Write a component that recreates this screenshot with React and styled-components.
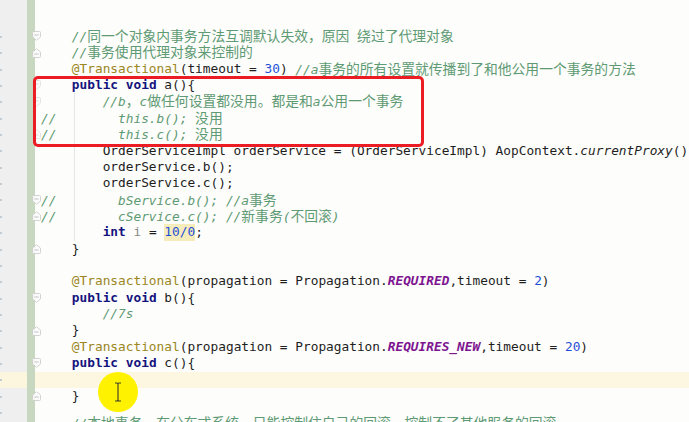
import React from "react";
import styled, { createGlobalStyle, css } from "styled-components";

const LINE = 16.36;

const GlobalStyle = createGlobalStyle`
  html, body {
    margin: 0;
    padding: 0;
    background: #fdfdfb;
  }
  body {
    overflow: hidden;
  }
`;

// each line: fold marker, tokens as [kind, text]
const lines = [
  { fold: "start", t: [["", "    "], ["cm", "//同一个对象内事务方法互调默认失效，原因 绕过了代理对象"]] },
  { fold: "end", t: [["", "    "], ["cm", "//事务使用代理对象来控制的"]] },
  {
    t: [
      ["", "    "],
      ["ann", "@Transactional"],
      ["", "(timeout = "],
      ["num", "30"],
      ["", ") "],
      ["cm", "//a事务的所有设置就传播到了和他公用一个事务的方法"],
    ],
  },
  { fold: "start", faint: true, t: [["", "    "], ["kw", "public"], ["", " "], ["kw", "void"], ["", " a(){"]] },
  { fold: "start", faint: true, guide: true, t: [["", "        "], ["cm", "//b，c做任何设置都没用。都是和a公用一个事务"]] },
  { guide: true, t: [["cm", "//        this.b(); 没用"]] },
  { fold: "end", faint: true, guide: true, t: [["cm", "//        this.c(); 没用"]] },
  {
    guide: true,
    t: [
      ["", "        OrderServiceImpl orderService = (OrderServiceImpl) AopContext."],
      ["it", "currentProxy"],
      ["", "()"],
    ],
  },
  { guide: true, t: [["", "        orderService.b();"]] },
  { guide: true, t: [["", "        orderService.c();"]] },
  { fold: "start", guide: true, t: [["cm", "//        bService.b(); //a事务"]] },
  { fold: "end", guide: true, t: [["cm", "//        cService.c(); //新事务(不回滚)"]] },
  {
    guide: true,
    t: [
      ["", "        "],
      ["kw", "int"],
      ["", " "],
      ["gray", "i"],
      ["", " = "],
      ["hl", "10/0"],
      ["", ";"],
    ],
  },
  { fold: "end", t: [["", "    }"]] },
  { t: [] },
  {
    t: [
      ["", "    "],
      ["ann", "@Transactional"],
      ["", "(propagation = Propagation."],
      ["st", "REQUIRED"],
      ["", ",timeout = "],
      ["num", "2"],
      ["", ")"],
    ],
  },
  { fold: "start", t: [["", "    "], ["kw", "public"], ["", " "], ["kw", "void"], ["", " b(){"]] },
  { t: [["", "        "], ["cm", "//7s"]] },
  { fold: "end", t: [["", "    }"]] },
  {
    t: [
      ["", "    "],
      ["ann", "@Transactional"],
      ["", "(propagation = Propagation."],
      ["st", "REQUIRES_NEW"],
      ["", ",timeout = "],
      ["num", "20"],
      ["", ")"],
    ],
  },
  { fold: "start", t: [["", "    "], ["kw", "public"], ["", " "], ["kw", "void"], ["", " c(){"]] },
  { current: true, t: [] },
  { fold: "end", t: [["", "    }"]] },
  { push: true, t: [["", "    "], ["cm", "//本地事务，在分布式系统，只能控制住自己的回滚，控制不了其他服务的回滚"]] },
];

const Page = styled.div`
  position: relative;
  display: flex;
  width: 689px;
  height: 422px;
  overflow: hidden;
  background: #fdfdfb;
`;

const Gutter = styled.div`
  width: 27px;
  flex: none;
  background: #efefef;
  padding-top: 28px;
  display: flex;
  flex-direction: column;
`;

const GutterCell = styled.div`
  height: ${LINE}px;
  flex: none;
  background-color: ${(p) => (p.$current ? "#fcf6de" : "transparent")};
  background-image: linear-gradient(#c3cbd3, #c3cbd3);
  background-repeat: no-repeat;
  background-size: 2px 2px;
  background-position: 0 55%;
`;

const ChangeBar = styled.div`
  width: 8px;
  flex: none;
  background: #c8d7bf;
`;

const Code = styled.div`
  flex: 1;
  min-width: 0;
  padding-top: 28px;
  display: flex;
  flex-direction: column;
  font-family: "DejaVu Sans Mono", "Liberation Mono", "Noto Sans CJK SC", monospace;
  font-size: 12.8px;
  color: #1e1e1e;
`;

const Line = styled.div`
  display: flex;
  align-items: center;
  height: ${LINE}px;
  line-height: ${LINE}px;
  flex: none;
  white-space: pre;
  margin-top: ${(p) => (p.$push ? "11px" : "0")};
  background-color: ${(p) => (p.$current ? "#fdf7e2" : "transparent")};
  ${(p) =>
    p.$guide &&
    css`
      background-image: linear-gradient(#e6e6e6, #e6e6e6);
      background-repeat: no-repeat;
      background-size: 1px 100%;
      background-position: 39px 0;
    `}
`;

const FoldSlot = styled.div`
  width: 6px;
  flex: none;
  display: flex;
  align-items: center;
`;

const FoldIcon = styled.svg`
  margin-left: -3px;
  flex: none;
  opacity: ${(p) => (p.$faint ? 0.55 : 0.9)};
`;

const Text = styled.span``;

const Kw = styled.span`
  color: #14147e;
  font-weight: bold;
`;

const Ann = styled.span`
  color: #9b8622;
`;

const Num = styled.span`
  color: #1f4fd8;
`;

const Marked = styled.span`
  color: #1f4fd8;
  background: #f6ebbb;
`;

const Faded = styled.span`
  color: #8a8a8a;
`;

const Italic = styled.span`
  font-style: italic;
`;

const Static = styled.span`
  color: #7d1591;
  font-weight: bold;
  font-style: italic;
`;

const Comment = styled.span`
  color: #5e9a73;
  font-style: italic;
`;

const Han = styled.span`
  display: inline-block;
  height: ${LINE}px;
  line-height: ${LINE}px;
  vertical-align: baseline;
  font-family: "Noto Sans CJK SC", sans-serif;
  font-style: normal;
  font-size: 13.8px;
`;

const RedBox = styled.div`
  position: absolute;
  left: 33px;
  top: 76px;
  width: 391px;
  height: 71px;
  box-sizing: border-box;
  border: 3px solid #ec1c24;
  border-radius: 5px;
`;

const CursorSpot = styled.div`
  position: absolute;
  left: 98px;
  top: 372px;
  width: 40px;
  height: 40px;
  border-radius: 50%;
  background: #fff200;
  filter: blur(0.4px);
  display: flex;
  align-items: center;
  justify-content: center;
`;

function FoldMarker({ kind, faint }) {
  if (kind === "start") {
    return (
      <FoldIcon width="9" height="10" viewBox="0 0 9 10" $faint={faint}>
        <path d="M0.5 1.5 Q0.5 0.5 1.5 0.5 H7.5 Q8.5 0.5 8.5 1.5 V6 L4.5 9.3 L0.5 6 Z" fill="#fbfbfb" stroke="#cfcfcf" />
        <path d="M2.5 4 H6.5" stroke="#bdbdbd" />
      </FoldIcon>
    );
  }
  return (
    <FoldIcon width="9" height="10" viewBox="0 0 9 10" $faint={faint}>
      <path d="M0.5 8.5 Q0.5 9.5 1.5 9.5 H7.5 Q8.5 9.5 8.5 8.5 V4 L4.5 0.7 L0.5 4 Z" fill="#fbfbfb" stroke="#cfcfcf" />
      <path d="M2.5 6 H6.5" stroke="#bdbdbd" />
    </FoldIcon>
  );
}

const HAN = /[\u3000-\u303f\u4e00-\u9fff\uff00-\uffef]/;

function commentParts(text) {
  return text
    .split(/([\u3000-\u303f\u4e00-\u9fff\uff00-\uffef]+)/)
    .filter(Boolean)
    .map((part, i) => (HAN.test(part) ? <Han key={i}>{part}</Han> : part));
}

function Token({ kind, text }) {
  switch (kind) {
    case "kw":
      return <Kw>{text}</Kw>;
    case "ann":
      return <Ann>{text}</Ann>;
    case "num":
      return <Num>{text}</Num>;
    case "hl":
      return <Marked>{text}</Marked>;
    case "gray":
      return <Faded>{text}</Faded>;
    case "it":
      return <Italic>{text}</Italic>;
    case "st":
      return <Static>{text}</Static>;
    case "cm":
      return <Comment>{commentParts(text)}</Comment>;
    default:
      return <Text>{text}</Text>;
  }
}

function IBeam() {
  return (
    <svg width="8" height="20" viewBox="0 0 8 20">
      <path d="M1 1 H3 Q4 1 4 2.5 Q4 1 5 1 H7 M4 2.5 V17.5 M1 19 H3 Q4 19 4 17.5 Q4 19 5 19 H7" fill="none" stroke="#3a3a2a" strokeWidth="1.1" />
    </svg>
  );
}

export default function App() {
  return (
    <>
      <GlobalStyle />
      <Page>
        <Gutter>
          {lines.map((l, i) => (
            <GutterCell key={i} $current={l.current} />
          ))}
        </Gutter>
        <ChangeBar />
        <Code>
          {lines.map((l, i) => (
            <Line key={i} $current={l.current} $guide={l.guide} $push={l.push}>
              <FoldSlot>{l.fold && <FoldMarker kind={l.fold} faint={l.faint} />}</FoldSlot>
              {l.t.map(([kind, text], j) => (
                <Token key={j} kind={kind} text={text} />
              ))}
            </Line>
          ))}
        </Code>
        <RedBox />
        <CursorSpot>
          <IBeam />
        </CursorSpot>
      </Page>
    </>
  );
}
